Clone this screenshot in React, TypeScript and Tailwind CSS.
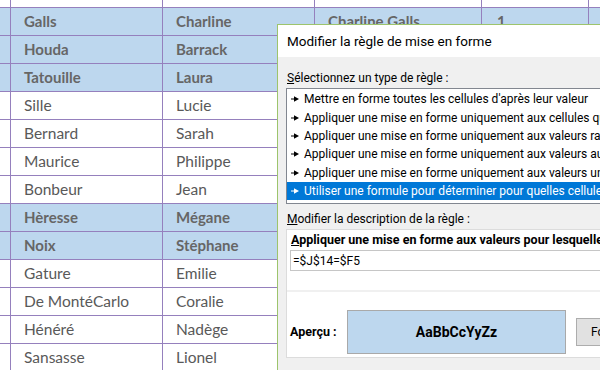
import React from "react";

type Row = { a: string; b: string; c?: string; d?: string; bold?: boolean };

const rows: Row[] = [
  { a: "Soller", b: "Hassan", c: "Hassan Soller", d: "1" },
  { a: "Galls", b: "Charline", c: "Charline Galls", d: "1", bold: true },
  { a: "Houda", b: "Barrack", c: "Barrack Houda", d: "1", bold: true },
  { a: "Tatouille", b: "Laura", c: "Laura Tatouille", d: "1", bold: true },
  { a: "Sille", b: "Lucie" },
  { a: "Bernard", b: "Sarah" },
  { a: "Maurice", b: "Philippe" },
  { a: "Bonbeur", b: "Jean" },
  { a: "Hèresse", b: "Mégane", bold: true },
  { a: "Noix", b: "Stéphane", bold: true },
  { a: "Gature", b: "Emilie" },
  { a: "De MontéCarlo", b: "Coralie" },
  { a: "Hénéré", b: "Nadège" },
  { a: "Sansasse", b: "Lionel" },
];

const ruleTypes = [
  "Mettre en forme toutes les cellules d'après leur valeur",
  "Appliquer une mise en forme uniquement aux cellules qui contiennent",
  "Appliquer une mise en forme uniquement aux valeurs rang inférieur ou supérieur",
  "Appliquer une mise en forme uniquement aux valeurs au-dessus ou en dessous de la moyenne",
  "Appliquer une mise en forme uniquement aux valeurs uniques ou aux doublons",
  "Utiliser une formule pour déterminer pour quelles cellules le format sera appliqué",
];

function Arrow({ color }: { color: string }) {
  return (
    <svg width="8" height="6" viewBox="0 0 8 6" className="shrink-0">
      <polygon points="0,2.4 3,2.4 3,0.2 8,3 3,5.8 3,3.6 0,3.6" fill={color} />
    </svg>
  );
}

export default function App() {
  const cellFont = { fontFamily: "Lato, 'Open Sans', sans-serif" };
  const uiFont = { fontFamily: "Roboto, 'Noto Sans', sans-serif" };
  return (
    <div className="relative w-[600px] h-[370px] overflow-hidden bg-white">
      <div className="-mt-[20px] flex flex-col" style={cellFont}>
        {rows.map((r, i) => (
          <div
            key={i}
            className={`flex h-[28px] shrink-0 border-b border-[#9580bd] ${
              r.bold
                ? "bg-[#bdd7ee] font-bold text-[15px] text-[#666666]"
                : "bg-white text-[15.5px] text-[#595959]"
            }`}
          >
            <div className="w-[10px] shrink-0" />
            <div className="w-[152px] shrink-0 border-l border-[#9580bd] pl-[13px] flex items-center">{r.a}</div>
            <div className="w-[152px] shrink-0 border-l border-[#9580bd] pl-[13px] flex items-center">{r.b}</div>
            <div className="w-[167px] shrink-0 border-l border-[#9580bd] pl-[13px] flex items-center">{r.c ?? ""}</div>
            <div className="w-[107px] shrink-0 border-l border-[#9580bd] pl-[15px] flex items-center">{r.d ?? ""}</div>
            <div className="w-[12px] shrink-0 border-l border-[#9580bd]" />
          </div>
        ))}
      </div>

      <div
        className="absolute left-[277px] top-[24px] w-[360px] h-[360px] border border-[#9dc46c] bg-[#f0f0f0] flex flex-col text-black"
        style={uiFont}
      >
        <div className="h-[32px] shrink-0 bg-white flex items-center pl-[9px] text-[13.5px] whitespace-nowrap">
          Modifier la règle de mise en forme
        </div>
        <div className="flex flex-col pl-[8px]">
          <div className="mt-[13px] h-[16px] leading-[16px] text-[12px] pl-[1px] whitespace-nowrap">
            <span className="underline">S</span>électionnez un type de règle :
          </div>
          <div className="mt-[2px] h-[116px] border border-[#828790] bg-white pt-[1px] flex flex-col">
            {ruleTypes.map((t, i) => {
              const sel = i === ruleTypes.length - 1;
              return (
                <div
                  key={i}
                  className={`h-[18.4px] flex items-center gap-[5px] pl-[4px] whitespace-nowrap text-[12px] ${
                    sel ? "bg-[#0078d7] text-white" : "text-black"
                  }`}
                >
                  <Arrow color={sel ? "#ffffff" : "#000000"} />
                  <span>{t}</span>
                </div>
              );
            })}
          </div>
          <div className="mt-[7px] h-[16px] leading-[16px] text-[12px] pl-[1px] whitespace-nowrap">
            <span className="underline">M</span>odifier la description de la règle :
          </div>
          <div className="mt-[2px] h-[129px] border border-[#dcdcdc] bg-white flex flex-col">
            <div className="pt-[2px] pl-[4px] h-[20px] leading-[16px] text-[12.5px] font-bold whitespace-nowrap">
              <span className="underline">A</span>ppliquer une mise en forme aux valeurs pour lesquelles cette formule est vraie :
            </div>
            <div className="ml-[3px] h-[21px] border border-[#c6c6c6] bg-white flex items-center pl-[2px] text-[12px]">
              =$J$14=$F5
            </div>
            <div className="mt-[19px] h-[2px] bg-[#f0f0f0]" />
            <div className="flex items-center pl-[3px] mt-[18px]">
              <div className="w-[57px] shrink-0 text-[12.5px] font-bold whitespace-nowrap">Aperçu :</div>
              <div className="w-[219px] h-[44px] shrink-0 border border-[#a9a9a9] bg-[#bdd7ee] flex items-center justify-center text-[14px] font-bold">
                AaBbCcYyZz
              </div>
              <div className="ml-[10px] h-[28px] w-[90px] shrink-0 border border-[#adadad] bg-[#e1e1e1] flex items-center pl-[14px] text-[12px] whitespace-nowrap">
                Format...
              </div>
            </div>
          </div>
        </div>
      </div>
    </div>
  );
}
